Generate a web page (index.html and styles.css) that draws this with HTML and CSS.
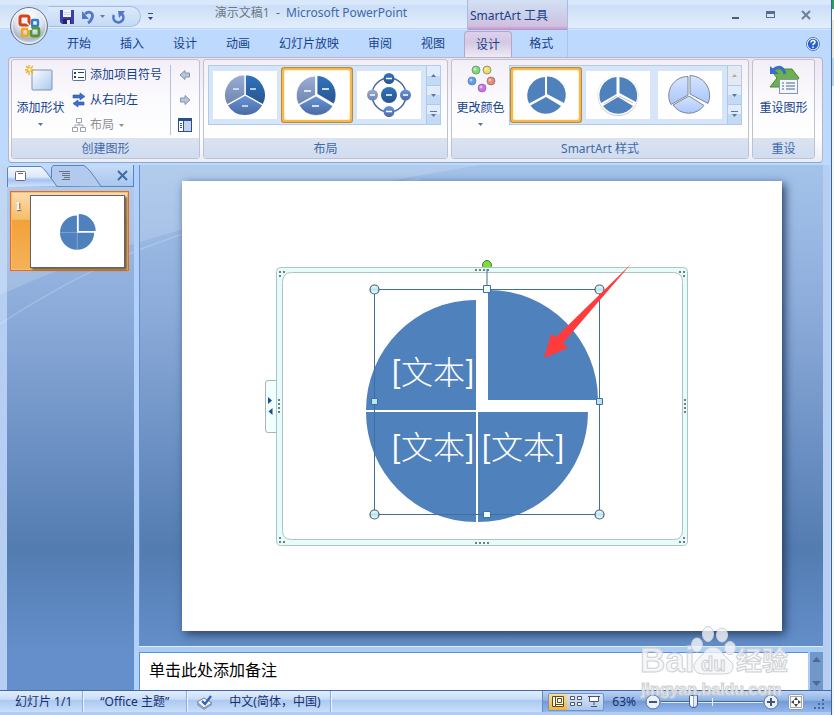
FILE: index.html
```html
<!DOCTYPE html>
<html lang="zh-CN">
<head>
<meta charset="utf-8">
<title>演示文稿1 - Microsoft PowerPoint</title>
<link rel="stylesheet" href="styles.css">
</head>
<body>
<svg class="defs" width="0" height="0" aria-hidden="true">
  <defs>
    <linearGradient id="gl" x1="0" y1="0" x2="0" y2="1"><stop offset="0" stop-color="#9aaed8"/><stop offset="1" stop-color="#6f84ad"/></linearGradient>
    <linearGradient id="gr" x1="0" y1="0" x2="0" y2="1"><stop offset="0" stop-color="#2f74c0"/><stop offset="1" stop-color="#2a548c"/></linearGradient>
    <linearGradient id="gb" x1="0" y1="0" x2="0" y2="1"><stop offset="0" stop-color="#6796dc"/><stop offset="1" stop-color="#4a699f"/></linearGradient>
    <linearGradient id="pale" x1="0" y1="0" x2="0" y2="1"><stop offset="0" stop-color="#d6e4ff"/><stop offset="1" stop-color="#a9c6fb"/></linearGradient>
    <linearGradient id="ice" x1="0" y1="0" x2="1" y2="1"><stop offset="0" stop-color="#fdfeff"/><stop offset="1" stop-color="#a9c8ea"/></linearGradient>
    <linearGradient id="handle" x1="0" y1="0" x2="0" y2="1"><stop offset="0" stop-color="#f4ffff"/><stop offset=".5" stop-color="#b9e6ee"/><stop offset="1" stop-color="#eaffff"/></linearGradient>
    <radialGradient id="orb" cx=".5" cy=".25" r=".8"><stop offset="0" stop-color="#fff"/><stop offset=".5" stop-color="#dfe4ec"/><stop offset=".75" stop-color="#a9b4c8"/><stop offset="1" stop-color="#f5f8ff"/></radialGradient>
    <symbol id="quarters" viewBox="366 290 234 234">
      <path fill="#4f81bd" d="M476 410H366A110 110 0 0 1 476 300ZM488 400V290A110 110 0 0 1 598 400ZM478 412H588A110 110 0 0 1 478 522ZM476 412V522A110 110 0 0 1 366 412Z"/>
    </symbol>
    <symbol id="up" viewBox="0 0 7 4"><path d="M0 4L3.500 0L7 4Z"/></symbol>
    <symbol id="down" viewBox="0 0 7 4"><path d="M0 0H7L3.500 4Z"/></symbol>
  </defs>
</svg>

<div class="app">
  <header class="titlebar">
    <div class="title-left">
      <div class="qat">
        <button aria-label="保存"><svg width="16" height="16" viewBox="0 0 16 16"><path fill="#3b3fae" d="M1 1H15V15H3L1 13Z"/><path fill="#f4f6ff" d="M4 1H12V8H4Z"/><path fill="#c9d2ee" d="M5 3H11V4H5ZM5 5H11V6H5Z"/><path fill="#23265f" d="M4 10H12V15H4Z"/><path fill="#e3e7f5" d="M8 11H11V15H8Z"/></svg></button>
        <button aria-label="撤消"><svg width="14" height="16" viewBox="0 0 14 16"><path d="M4 5C8 1 13 4 11 9Q10 12 7 14" fill="none" stroke="#4f78c8" stroke-width="2.800"/><path fill="#4f78c8" d="M1 2V10H8Z"/></svg></button>
        <button class="tiny" aria-label="撤消列表"><svg width="5" height="3"><use href="#down"/></svg></button>
        <button aria-label="恢复"><svg width="15" height="16" viewBox="0 0 15 16"><path d="M11 5A5 5 0 1 1 3 6" fill="none" stroke="#4f78c8" stroke-width="2.600"/><path fill="#4f78c8" d="M7 2H14L8 9Z"/></svg></button>
      </div>
      <button class="qat-more" aria-label="自定义快速访问工具栏"><svg width="7" height="8" viewBox="0 0 7 8"><path fill="#2b4a86" d="M1 0H6V1H1ZM1 4H6L3.500 7Z"/></svg></button>
      <h1 class="title"><span>演示文稿1</span> &nbsp;- &nbsp;Microsoft PowerPoint</h1>
    </div>
    <div class="context-title">SmartArt 工具</div>
    <div class="window-controls">
      <button aria-label="最小化"><svg width="10" height="12"><path fill="#4a5f7f" d="M1 8H8V10H1Z"/></svg></button>
      <button aria-label="最大化"><svg width="10" height="12"><path fill="#566c90" d="M0 2H9V9H0ZM1 5V8H8V5Z" fill-rule="evenodd"/></svg></button>
      <button aria-label="关闭"><svg width="10" height="12" viewBox="0 0 10 12"><path d="M1 2L9 10M9 2L1 10" stroke="#6c7f9f" stroke-width="2"/></svg></button>
    </div>
    <button class="office" aria-label="Office 按钮"><svg width="42" height="42" viewBox="0 0 42 42"><circle cx="21" cy="21" r="18.500" fill="url(#orb)" stroke="#69758c"/><circle cx="21" cy="21" r="17" fill="none" stroke="#fff" opacity=".8"/>
      <g fill="none" stroke-width="3"><rect x="12" y="11" width="9" height="9" rx="2" stroke="#d8431b"/><rect x="24" y="15" width="6" height="6" rx="1" stroke="#2b7fd0" stroke-width="2.400"/><rect x="14" y="24" width="6" height="7" rx="1" stroke="#f0a71c" stroke-width="2.600"/><rect x="23" y="23" width="8" height="8" rx="2" stroke="#4f9a36" stroke-width="2.800"/></g>
      <path d="M18 17L21 20M20 24H24M22 20V25" stroke="#fff" stroke-width="1.500"/></svg></button>
  </header>

  <nav class="tabs">
    <button>开始</button><button>插入</button><button>设计</button><button>动画</button><button>幻灯片放映</button><button>审阅</button><button>视图</button>
    <div class="context-tabs"><button class="active">设计</button><button>格式</button></div>
    <button class="help" aria-label="帮助"><svg width="14" height="14" viewBox="0 0 14 14"><circle cx="7" cy="7" r="6.500" fill="#fff" stroke="#5577aa"/><circle cx="7" cy="7" r="5.200" fill="#2363cf"/><path d="M5 5.500Q5 3.500 7 3.500T9 5.300Q9 6.300 7.500 7Q7 7.300 7 8.300M7 9.500V11" fill="none" stroke="#fff" stroke-width="1.500"/></svg></button>
  </nav>

  <main class="ribbon">
    <section class="group">
      <div class="group-body create">
        <button class="big"><svg width="32" height="32" viewBox="0 0 32 32"><rect x="7" y="5" width="20" height="20" rx="1" fill="url(#ice)" stroke="#7e93b5"/><path d="M4 0V10M0 5H9M1 1L8 8M8 1L1 8" stroke="#e9b21c" stroke-width="1.300"/><circle cx="4.500" cy="4.500" r="1.500" fill="#fff6b0"/></svg><span>添加形状</span><svg class="arrow" width="5" height="3"><use href="#down"/></svg></button>
        <div class="small-list">
          <button><svg width="16" height="16" viewBox="0 0 16 16"><rect x="1.500" y="2.500" width="13" height="11" rx="1" fill="#fff" stroke="#5b7299"/><path fill="#24406e" d="M3 5H5V7H3ZM3 9H5V11H3ZM7 5H13V6H7ZM7 10H13V11H7Z"/></svg>添加项目符号</button>
          <button><svg width="16" height="16" viewBox="0 0 16 16"><path fill="#3a70cf" stroke="#2b519b" stroke-width=".6" d="M2 3H9V1L14 4.500L9 8V6H2ZM13 10H7V8L2 11.500L7 15V13H13Z"/></svg>从右向左</button>
          <button class="disabled" disabled><svg width="16" height="16" viewBox="0 0 16 16"><path fill="#fff" stroke="#9ba3b0" d="M5.500 1.500H10.500V5.500H5.500ZM1.500 10.500H6.500V14.500H1.500ZM9.500 10.500H14.500V14.500H9.500ZM8 6V8M4 10V8H12V10"/></svg>布局<svg class="arrow" width="5" height="3"><use href="#down"/></svg></button>
        </div>
        <div class="side-list">
          <button aria-label="升级"><svg width="12" height="12" viewBox="0 0 12 12"><path fill="#b9c6d9" stroke="#8294b0" d="M1 6L6 1.500V4H10.500V8H6V10.500Z"/></svg></button>
          <button aria-label="降级"><svg width="12" height="12" viewBox="0 0 12 12"><path fill="#b9c6d9" stroke="#8294b0" d="M11 6L6 1.500V4H1.500V8H6V10.500Z"/></svg></button>
          <button aria-label="文本窗格"><svg width="14" height="14" viewBox="0 0 14 14"><path fill="#2c4d85" d="M0 0H14V14H0Z"/><path fill="#fff" d="M1 3H5V13H1Z"/><path fill="#c3d4ee" d="M6 3H13V13H6Z"/><path fill="#2c4d85" d="M2 5H4V6H2ZM2 7H4V8H2ZM2 9H4V10H2Z"/></svg></button>
        </div>
      </div>
      <h2>创建图形</h2>
    </section>

    <section class="group">
      <div class="group-body layouts">
        <div class="gallery">
          <button class="thumb" aria-label="基本饼图"><svg viewBox="0 0 64 48"><g transform="translate(32 24)" stroke="#fff" stroke-width="1.300"><path fill="url(#gr)" d="M0 0V-20.500A20.500 20.500 0 0 1 18 10Z"/><path fill="url(#gb)" d="M0 0L18 10A20.500 20.500 0 0 1-18 10Z"/><path fill="url(#gl)" d="M0 0L-18 10A20.500 20.500 0 0 1 0-20.500Z"/><path d="M5-6H11M-12-6H-6M-3 11H3" stroke="#e4ecf8"/></g></svg></button>
          <button class="thumb selected" aria-label="射线饼图"><svg viewBox="0 0 64 48"><g transform="translate(31 24)" stroke="#fff" stroke-width=".8"><path fill="url(#gr)" d="M1-1V-19.500A19.500 19.500 0 0 1 17.800 9Z"/><path fill="url(#gb)" d="M0 1L17 11A19.500 19.500 0 0 1-17 10Z"/><path fill="url(#gl)" d="M-.5 0L-17.500 9.500A19.500 19.500 0 0 1-.5-19Z"/><path d="M6-6H13M-12-4H-5M-4 11H3" stroke-width="1.500"/></g></svg></button>
          <button class="thumb" aria-label="射线循环"><svg viewBox="0 0 64 48"><circle cx="32" cy="24" r="17" fill="none" stroke="#48699f" stroke-width="1.500"/><g fill="url(#gb)"><circle cx="32" cy="24" r="8" fill="url(#gr)"/><circle cx="32" cy="7.500" r="5.500" fill="url(#gr)"/><circle cx="48.500" cy="24" r="5.500"/><circle cx="32" cy="40.500" r="5.500"/><circle cx="15.500" cy="24" r="5.500" fill="url(#gl)"/></g><path d="M29 24H35M29 7.500H35M46 24H51M29 40.500H35M13 24H18" stroke="#fff" stroke-width="1.300"/></svg></button>
          <div class="scroller"><button aria-label="上一行"><svg width="5" height="3"><use href="#up"/></svg></button><button aria-label="下一行"><svg width="5" height="3"><use href="#down"/></svg></button><button aria-label="更多布局"><svg width="7" height="7" viewBox="0 0 7 7"><path d="M0 0H7V1H0ZM1 3H6L3.500 6Z"/></svg></button></div>
        </div>
      </div>
      <h2>布局</h2>
    </section>

    <section class="group">
      <div class="group-body styles">
        <button class="big"><svg width="32" height="32" viewBox="0 0 32 32"><g stroke="#69758c" stroke-width=".7"><circle cx="11" cy="5" r="4" fill="#7be06a"/><circle cx="22" cy="5" r="4" fill="#f3dc5b"/><circle cx="7" cy="16" r="4" fill="#5a9df2"/><circle cx="26" cy="16" r="4" fill="#f28468"/><circle cx="17" cy="23" r="4" fill="#d36bea"/></g><g fill="#fff" opacity=".55"><circle cx="10" cy="4" r="1.500"/><circle cx="21" cy="4" r="1.500"/><circle cx="6" cy="15" r="1.500"/><circle cx="25" cy="15" r="1.500"/><circle cx="16" cy="22" r="1.500"/></g></svg><span>更改颜色</span><svg class="arrow" width="5" height="3"><use href="#down"/></svg></button>
        <div class="gallery">
          <button class="thumb selected" aria-label="简单填充"><svg viewBox="0 0 64 48"><g transform="translate(32 24)" fill="#4f81bd"><path d="M1-1V-18.500A18.500 18.500 0 0 1 18 8Z"/><path d="M0 2L15 11A18.500 18.500 0 0 1-15.500 10.500Z"/><path d="M-1 0L-17 8.500A18.500 18.500 0 0 1-1-18Z"/></g></svg></button>
          <button class="thumb" aria-label="白色轮廓"><svg viewBox="0 0 64 48"><g transform="translate(32 24)"><circle r="20.500" cy=".5" fill="#cfcfcf"/><circle r="20" fill="#fff"/><g fill="#4f81bd"><path d="M1.500-2V-18A18.500 18.500 0 0 1 18 7Z"/><path d="M0 2L15 11A18.500 18.500 0 0 1-15 11Z"/><path d="M-1.500-1L-17 8A18.500 18.500 0 0 1-1.500-18Z"/></g><path d="M-14 9L-1 1M1 1L15 8" stroke="#999" stroke-width=".6"/></g></svg></button>
          <button class="thumb" aria-label="细微效果"><svg viewBox="0 0 64 48"><g transform="translate(31 24)" fill="url(#pale)" stroke="#7f8796" stroke-width="1"><path d="M1-1V-19.500A20 20 0 0 1 19 8.500Z"/><path d="M0 1L15 10.500A19 19 0 0 1-16 10Z"/><path d="M-1 0L-18 9.500A19 19 0 0 1-1-18.500Z"/></g></svg></button>
          <div class="scroller"><button class="off" disabled aria-label="上一行"><svg width="5" height="3"><use href="#up"/></svg></button><button aria-label="下一行"><svg width="5" height="3"><use href="#down"/></svg></button><button aria-label="更多样式"><svg width="7" height="7" viewBox="0 0 7 7"><path d="M0 0H7V1H0ZM1 3H6L3.500 6Z"/></svg></button></div>
        </div>
      </div>
      <h2>SmartArt 样式</h2>
    </section>

    <section class="group">
      <div class="group-body reset">
        <button class="big"><svg width="32" height="32" viewBox="0 0 32 32"><path fill="#6db04e" stroke="#4b8a35" d="M2 4H24L31 13L24 22H2L9 13Z"/><rect x="11.500" y="14.500" width="18" height="14" fill="#f3f7fd" stroke="#8296b5"/><path d="M14 18H16M18 18H27M14 21H16M18 21H27M14 24H16M18 24H27" stroke="#4e6288"/><path d="M5 5Q14-2 17 9" fill="none" stroke="#3a6ccb" stroke-width="3"/><path fill="#3a6ccb" d="M2 1V9H11Z"/></svg><span>重设图形</span></button>
      </div>
      <h2>重设</h2>
    </section>
  </main>

  <div class="workspace">
    <svg class="glow" viewBox="0 0 834 485" preserveAspectRatio="xMinYMin slice" aria-hidden="true"><path fill="#fff" fill-opacity=".16" d="M0 0H480Q170 52 7 127L0 130Z"/><path d="M0 159Q70 113 139 85Q240 44 420 14" fill="none" stroke="#fff" stroke-opacity=".2" stroke-width="1.500"/></svg>
    <aside class="outline">
      <div class="pane-tabs">
        <svg class="tab-shapes" width="100" height="22" viewBox="0 0 100 22" aria-hidden="true"><defs><linearGradient id="tabfill" x1="0" y1="0" x2="0" y2="1"><stop offset="0" stop-color="#f4f8ff"/><stop offset=".5" stop-color="#dce8fb"/><stop offset=".65" stop-color="#a3c2f0"/><stop offset="1" stop-color="#d5e5fb"/></linearGradient></defs><path fill="#b2caee" stroke="#5884bd" d="M44.500 21V3L46 .5H77Q82 3 94 21.500"/><path fill="url(#tabfill)" stroke="#5884bd" d="M.5 22V3L2 1.500H34Q38 4 50 21.500"/></svg>
        <button aria-label="幻灯片"><svg width="12" height="12"><rect x=".5" y="1.500" width="10" height="9" rx="1" fill="#fff" stroke="#6c6c6c"/><path fill="#6c6c6c" d="M3 3H8V4H3Z"/></svg></button>
        <button aria-label="大纲"><svg width="12" height="12"><path d="M0 1.500H11M3 3.500H11M3 5.500H11M5 7.500H11M3 9.500H11" stroke="#69727f"/></svg></button>
        <button class="close" aria-label="关闭窗格"><svg width="11" height="11"><path d="M1 1L10 10M10 1L1 10" stroke="#3f6aa3" stroke-width="2"/></svg></button>
      </div>
      <button class="slide-item" aria-label="幻灯片 1"><span class="num">1</span><span class="mini"><svg width="36" height="36"><use href="#quarters"/></svg></span></button>
    </aside>

    <div class="editor">
      <div class="stage">
        <svg class="slide" viewBox="0 0 600 450">
          <circle cx="305" cy="84" r="4.500" fill="#7ee02b" stroke="#4e6e50"/>
          <path fill="#f2ffff" stroke="#a9b4b8" d="M95 199.500H86Q83.500 199.500 83.500 202V249Q83.500 251.500 86 251.500H95"/>
          <path fill="#1d4f91" d="M86 216L90 219.500L86 223ZM90.500 227L86.500 230.500L90.500 234Z"/>
          <path fill="#e6fcfb" fill-rule="evenodd" stroke="#aec3c6" d="M98.500 86.500H501.500Q505.500 86.500 505.500 90.500V359.500Q505.500 364.500 501.500 364.500H98.500Q94.500 364.500 94.500 359.500V90.500Q94.500 86.500 98.500 86.500ZM109.500 91.500Q100.500 91.500 100.500 101.500V349.500Q100.500 358.500 109.500 358.500H491.500Q500.500 358.500 500.500 349.500V101.500Q500.500 91.500 491.500 91.500Z"/>
          <g stroke="#747d82" stroke-width="2" fill="none"><path stroke-dasharray="2 2" d="M293 89H307M293 362H307M97 218V232M503 218V232"/><path d="M97 91H99M101 91H103M97 95H99M497 91H499M501 91H503M501 95H503M97 361H99M101 361H103M97 357H99M497 361H499M501 361H503M501 357H503"/></g>
          <svg x="184" y="109" width="234" height="234"><use href="#quarters"/></svg>
          <g class="shape-text"><text x="251" y="203">[<tspan>文本</tspan>]</text><text x="251" y="278">[<tspan>文本</tspan>]</text><text x="341" y="278">[<tspan>文本</tspan>]</text></g>
          <path fill="none" stroke="#416f9d" d="M192.500 108.500H417.500V333.500H192.500ZM305 88V108"/>
          <g fill="url(#handle)" stroke="#4c5f68" stroke-width="1.200"><circle cx="192.500" cy="108.500" r="4.500"/><circle cx="417.500" cy="108.500" r="4.500"/><circle cx="192.500" cy="333.500" r="4.500"/><circle cx="417.500" cy="333.500" r="4.500"/></g>
          <g fill="url(#handle)" stroke="#416f9d"><path d="M301.500 104.500H308.500V111.500H301.500ZM414.500 217.500H420.500V223.500H414.500ZM189.500 217.500H195.500V223.500H189.500ZM301.500 330.500H308.500V336.500H301.500Z"/></g>
          <path fill="#ff3b3b" d="M362 177L369 153L374 156L449 83L381 162L386 167Z"/>
        </svg>
      </div>
      <div class="notes">
        <textarea aria-label="备注">单击此处添加备注</textarea>
        <div class="notes-scroll"><svg width="9" height="5" viewBox="0 0 7 4"><use href="#up"/></svg><svg width="9" height="5" viewBox="0 0 7 4"><use href="#down"/></svg></div>
      </div>
    </div>
  </div>

  <footer class="status">
    <span class="cell count">幻灯片 1/1</span>
    <span class="cell theme">“Office 主题”</span>
    <span class="cell lang"><svg width="18" height="16" viewBox="0 0 18 16"><path fill="#f5f7fc" stroke="#7080a3" d="M1 8L8 4L16 9L8 14Z"/><path fill="#8c9fc2" d="M1 9L8 14L16 9V11L8 16L1 11Z"/><path d="M6 7L9 10L15 2" fill="none" stroke="#2f62b5" stroke-width="2.200"/></svg>中文(简体，中国)</span>
    <div class="zoom">
      <div class="views">
        <button class="on" aria-label="普通视图"><svg width="12" height="11"><path fill="#fff7dc" stroke="#5a4a26" d="M.5 .5H11.500V10.500H.5ZM3.500 1V10M5.500 2.500H9.500V6.500H5.500ZM4 8.500H11"/></svg></button>
        <button aria-label="幻灯片浏览"><svg width="12" height="11"><path fill="#fff" stroke="#4b5567" d="M.5 .5H4.500V3.500H.5ZM7.500 .5H11.500V3.500H7.500ZM.5 6.500H4.500V9.500H.5ZM7.500 6.500H11.500V9.500H7.500Z"/></svg></button>
        <button aria-label="幻灯片放映"><svg width="12" height="11"><path fill="#fff" stroke="#4b5567" d="M0 .5H12M1.500 1V5.500H10.500V1M6 6V9M3 10.500H9"/></svg></button>
      </div>
      <span class="percent">63%</span>
      <button aria-label="缩小"><svg width="16" height="16"><circle cx="8" cy="8" r="7" fill="#e8f0fb" stroke="#5d7294"/><path fill="#425674" d="M4 7H12V9H4Z"/></svg></button>
      <input type="range" min="0" max="100" value="30" aria-label="显示比例">
      <button aria-label="放大"><svg width="16" height="16"><circle cx="8" cy="8" r="7" fill="#e8f0fb" stroke="#5d7294"/><path fill="#425674" d="M4 7H7V4H9V7H12V9H9V12H7V9H4Z"/></svg></button>
      <button class="fit" aria-label="适应窗口"><svg width="16" height="16"><rect x=".5" y=".5" width="15" height="15" rx="2" fill="#f7f9fc" stroke="#8b9db8"/><rect x="2.500" y="2.500" width="11" height="11" fill="none" stroke="#555" stroke-dasharray="1 1"/><path fill="#444" d="M8 3L10 6H6ZM8 13L10 10H6ZM3 8L6 6V10ZM13 8L10 6V10Z"/></svg></button>
      <svg class="grip" width="12" height="12"><path fill="#466a9f" d="M8 0H10V2H8ZM4 4H6V6H4ZM8 4H10V6H8ZM0 8H2V10H0ZM4 8H6V10H4ZM8 8H10V10H8Z"/></svg>
    </div>
  </footer>
</div>

<svg class="watermark" width="152" height="74" viewBox="0 0 152 74" aria-hidden="true">
  <g fill="#f3f5f8" fill-opacity=".8" stroke="#cfd1d4" stroke-width="1">
    <text x="0" y="47" font-size="35">Bai</text>
    <ellipse cx="57" cy="20" rx="5.500" ry="7"/><ellipse cx="68" cy="9" rx="5.500" ry="7.500"/><ellipse cx="82" cy="10" rx="5.500" ry="7"/><ellipse cx="90" cy="23" rx="5.500" ry="6.500"/>
    <path d="M73 22Q79 22 83 29Q88 34 93 39Q94 49 84 49H62Q53 48 54 39Q57 34 63 29Q67 22 73 22Z"/>
    <text x="61" y="46" font-size="20">du</text>
    <text x="96" y="45" font-size="26">经验</text>
    <text x="1" y="70" font-size="16">jingyan.baidu.com</text>
  </g>
</svg>
</body>
</html>
```
FILE: styles.css
```css
* { box-sizing: border-box; }
html, body { height: 100%; margin: 0; }
body {
  position: relative;
  overflow: hidden;
  padding-right: 2px;
  background: linear-gradient(#19a857 0 9px, #fff 9px 20px, #f3e9d2 20px 58px, #b9d7e8 58px 86px, #f4f7fa 86px);
  font: 12px/16px "Noto Sans", "Noto Sans CJK SC", sans-serif;
  color: #15428b;
}
button {
  display: flex;
  align-items: center;
  justify-content: center;
  margin: 0;
  padding: 0;
  border: 0;
  background: none;
  color: inherit;
  font: inherit;
  white-space: nowrap;
}
h1, h2 { margin: 0; font: inherit; }
.defs { position: absolute; }
.app {
  display: flex;
  flex-direction: column;
  height: 100%;
  background: #bdd9fe;
  border-right: 1px solid #3f6391;
}

/* title bar */
.titlebar {
  position: relative;
  display: flex;
  flex: none;
  height: 30px;
  background: linear-gradient(#d9e8fb 0 5px, #cbdef7 5px, #e2eefc 28px, #a9cdf7 28px, #e3effd 30px);
}
.title-left { display: flex; flex: 0 0 467px; align-items: center; padding: 3px 0 0 48px; }
.qat {
  display: flex;
  align-items: center;
  gap: 6px;
  height: 21px;
  padding: 0 14px 0 10px;
  border: 1px solid #a3bee3;
  border-left-color: transparent;
  border-radius: 0 11px 11px 0;
  background: linear-gradient(#dce9fa, #c5daf5);
}
.qat .tiny { margin-left: -1px; fill: #5d7fb6; }
.qat-more { margin-left: 6px; }
.title { flex: 1; padding: 0 0 7px 1px; text-align: center; color: #3e6aaa; }
.title span { color: #6c7684; }
.context-title {
  flex: 0 0 101px;
  padding: 8px 0 0 2px;
  border: solid #a9bce0;
  border-width: 0 1px;
  background: linear-gradient(#d3e0f4, #cdcfe8 50%, #d2bfe0 26px, #b98fc6);
}
.window-controls { display: flex; align-items: center; gap: 25px; margin-left: auto; padding-right: 20px; }
.office { position: absolute; left: 8px; top: 5px; z-index: 2; }

/* tab row */
.tabs { display: flex; flex: none; gap: 1px; height: 27px; padding-left: 53px; }
.tabs button { padding: 0 14px; }
.context-tabs {
  display: flex;
  gap: 3px;
  margin-left: 3px;
  border-right: 1px solid #a9c6ed;
  padding: 1px 0 0 1px;
}
.context-tabs .active {
  padding: 0 11px;
  border: 1px solid #b5a5c8;
  border-bottom: 0;
  border-radius: 4px 4px 0 0;
  background: linear-gradient(#ded0ea, #d3c8e3 40%, #efe9f5);
}
.tabs .help { margin-left: auto; padding: 0 11px 0 0; }

/* ribbon */
.ribbon {
  display: flex;
  flex: none;
  gap: 3px;
  height: 106px;
  margin: 0 8px 2px;
  padding: 1px 2px 3px;
  border: 1px solid #b9b5c6;
  border-bottom-color: #8ea7cf;
  border-radius: 4px;
  background: linear-gradient(#ece4f2, #f4f3fa 30%, #fff 75%, #e9edf6);
}
.group {
  display: flex;
  flex-direction: column;
  border: 1px solid #bfc1cc;
  border-radius: 3px;
  background: linear-gradient(#f3eff7, #fbfafd 40%, #fff 80px);
}
.group h2 {
  height: 20px;
  margin-top: auto;
  border-radius: 0 0 2px 2px;
  background: linear-gradient(#dbe3f0, #d0dcf0);
  line-height: 22px;
  text-align: center;
  color: #3e6aaa;
}
.group-body { display: flex; padding: 5px 6px 0 4px; }
.create { padding-right: 7px; }
.styles { gap: 4px; }
.reset { padding-left: 6px; }
.big { flex-direction: column; justify-content: flex-start; width: 49px; height: 68px; }
.big span { margin-top: 3px; }
.big .arrow { margin-top: 7px; }
.arrow, .scroller { fill: #56779f; }
.small-list { display: flex; flex-direction: column; gap: 5px; width: 106px; padding: 0 0 0 6px; border-right: 1px solid #b4c2da; }
.small-list button { justify-content: flex-start; gap: 3px; height: 20px; }
.small-list .disabled { color: #8c8f97; }
.disabled .arrow { margin-left: 2px; fill: #8c8f97; }
.side-list { display: flex; flex-direction: column; gap: 5px; padding-left: 7px; }
.side-list button { width: 14px; height: 20px; }

.gallery {
  display: flex;
  gap: 8px;
  height: 60px;
  padding-left: 4px;
  border: 1px solid #b1cbec;
  background: #d6e6f8;
}
.thumb { flex: none; width: 64px; height: 48px; margin-top: 5px; background: #fff; }
.thumb svg { width: 64px; height: 48px; }
.thumb.selected {
  border-radius: 1px;
  box-shadow: 0 0 0 1px #fff3cf, 0 0 0 3px #f7b94e, 0 0 0 4px #b98942;
}
.scroller { display: flex; flex-direction: column; width: 14px; margin-left: -3px; }
.scroller button { flex: 1; border-left: 1px solid #aec9ea; border-bottom: 1px solid #aec9ea; background: linear-gradient(#e0ecfb 50%, #c4d9f3 50%); }
.scroller button:last-child { border-bottom: 0; }
.scroller .off { background: #e6e9ee; fill: #a5acb7; }

/* workspace */
.workspace {
  position: relative;
  display: flex;
  flex: 1;
  min-height: 0;
  margin-right: 1px;
  border: solid #b5cef1;
  border-width: 0 7px;
  background: linear-gradient(#a4c3ea, #8eaddb 26%, #6e92c5 52%, #537cb1 73%, #648fca 93%);
}
.glow { position: absolute; left: -7px; top: 0; width: calc(100% + 7px); height: 485px; }
.outline { position: relative; flex: 0 0 127px; }
.pane-tabs {
  position: relative;
  display: flex;
  align-items: center;
  height: 22px;
  padding: 0 5px 0 8px;
  border: solid #5884bd;
  border-width: 0 1px 1px 0;
  background: linear-gradient(#c5dbf8, #a9c6ee);
}
.tab-shapes { position: absolute; left: 0; top: 0; }
.pane-tabs button { position: relative; width: 12px; }
.pane-tabs button + button { margin-left: 32px; }
.pane-tabs .close { margin-left: auto; }
.slide-item {
  align-items: flex-start;
  justify-content: flex-start;
  width: 119px;
  height: 80px;
  margin: 4px 3px;
  padding: 3px 3px 3px 4px;
  border: 1px solid #ee6a1b;
  background: linear-gradient(#fbdcae, #f6bd6b 35%, #f2a23a 36%, #f5b258);
  box-shadow: inset 0 0 0 1px #f8bd72;
}
.num { width: 15px; margin-top: 3px; text-align: left; color: #fff; font: bold 12px/16px "Liberation Serif", serif; text-shadow: 1px 1px 1px #555; }
.mini { display: flex; flex: 1; align-items: center; justify-content: center; height: 73px; padding: 1px 0 0 1px; border: 1px solid #596477; background: #fff; box-shadow: 2px 2px 2px #80643a; }
.editor { position: relative; display: flex; flex: 1; flex-direction: column; min-width: 0; border-left: 5px solid #b1d1fb; box-shadow: inset 1px 0 #6791cc; }
.stage { display: flex; flex: 1; align-items: center; justify-content: center; min-height: 0; padding-left: 1px; }
.slide { flex: 0 1 600px; width: 600px; margin-top: -1px; background: #fff; box-shadow: 3px 3px 9px #263e62; }
.shape-text { fill: #fff; font: 32px/1 Lato, "Noto Sans CJK SC", sans-serif; text-anchor: middle; }
.shape-text tspan { font-weight: 300; }
.notes { display: flex; flex: none; height: 43px; border-top: 5px solid #a8cbf8; box-shadow: 0 -1px #e4effd; }
.notes textarea {
  flex: 1;
  min-width: 0;
  padding: 6px 9px;
  border: solid #5f8fcd;
  border-width: 1px 0 0 1px;
  border-radius: 0;
  background: #fff;
  color: #000;
  font: 16px/20px "Noto Sans CJK SC", sans-serif;
  resize: none;
  overflow: hidden;
}
.notes-scroll { display: flex; flex-direction: column; align-items: center; justify-content: space-between; width: 15px; padding: 5px 0 4px; background: #7198cb; border-left: 2px solid #a8cbf8; fill: #52688e; }

/* status bar */
.status {
  display: flex;
  flex: none;
  align-items: stretch;
  height: 25px;
  border-top: 1px solid #436aa3;
  border-bottom: 3px solid #b4cbed;
  background: linear-gradient(#e1edfd, #c9ddf8 40%, #abc8f0 42%, #c8dffd);
  color: #15306b;
}
.cell { display: flex; align-items: center; border-right: 1px solid #8facd5; box-shadow: 1px 0 #eef5ff; }
.count { padding: 0 10px 0 15px; }
.theme { padding: 0 17px; }
.lang { gap: 15px; padding: 0 9px; }
.zoom {
  display: flex;
  align-items: center;
  margin-left: auto;
  padding: 0 5px;
  border-left: 1px solid #668dc3;
  background: linear-gradient(#b9d2f3, #8fb2e6 45%, #7299d6 46%, #91b7ec);
}
.views { display: flex; height: 18px; border: 1px solid #7193c5; border-radius: 2px; background: linear-gradient(#d8e6f9, #abc7ee); }
.views button { width: 18px; }
.views .on { background: linear-gradient(#fbdd9a, #f5b33a); }
.percent { margin: 0 9px 0 8px; }
.zoom input {
  width: 102px;
  height: 16px;
  margin: 0;
  appearance: none;
  background:
    linear-gradient(#e7f0fd, #e7f0fd) 51px 4px / 1px 8px no-repeat,
    linear-gradient(#49699a 1px, #dce9fb 1px) 0 7px / 100% 2px no-repeat;
}
.zoom input::-webkit-slider-thumb {
  appearance: none;
  width: 9px;
  height: 13px;
  border: 1px solid #405f90;
  border-radius: 1px 1px 5px 5px;
  background: linear-gradient(90deg, #fff 3px, #8da8cf 3px 4px, #e0eaf8 4px);
}
.fit { margin-left: 9px; }
.grip { margin: 6px 0 0 10px; }

.watermark { position: absolute; right: 42px; bottom: 16px; font-family: "Liberation Sans", "Noto Sans CJK SC", sans-serif; font-weight: bold; pointer-events: none; }
```
